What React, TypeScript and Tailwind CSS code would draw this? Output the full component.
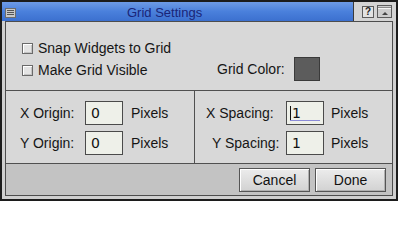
import React from "react";

function Checkbox() {
  return (
    <div className="w-[11px] h-[11px] border border-[#6a6a6a] bg-[#e4e4e4] shadow-[inset_1px_1px_0_#ffffff,inset_-1px_-1px_0_#c4c4c4] shrink-0" />
  );
}

function Field({ value, focused }: { value: string; focused?: boolean }) {
  return (
    <div className="relative w-[38px] h-[24px] border border-[#4a4a4a] bg-[#eef0e9] flex items-center pl-[3px] text-[14px] text-[#111] font-['DejaVu_Sans',sans-serif] shrink-0">
      {focused && <span className="w-px h-[14px] bg-[#111] mr-[1px]" />}
      <span className={focused ? "" : "pl-[2px]"}>{value}</span>
      {focused && <div className="absolute left-[3px] right-[3px] bottom-[3px] h-px bg-[#8b8bd9]" />}
    </div>
  );
}

function Btn({ label }: { label: string }) {
  return (
    <div className="w-[71px] h-[24px] border border-[#555] bg-gradient-to-b from-[#ececec] to-[#d2d2d2] shadow-[inset_1px_1px_0_#ffffff,inset_-1px_-1px_0_#b0b0b0] flex items-center justify-center text-[14px] text-[#111]">
      {label}
    </div>
  );
}

export default function App() {
  return (
    <div className="w-[398px] h-[201px] border-2 border-[#1c1c1c] bg-[#cfcfcf] flex flex-col font-['Liberation_Sans',Arial,sans-serif] text-[#151515] overflow-hidden">
      {/* Title bar */}
      <div className="h-[19px] flex shrink-0">
        <div className="w-[351px] h-full bg-gradient-to-b from-[#6e9be6] via-[#4a80dc] to-[#3c70cf] flex items-center">
          <div className="ml-[3px] mt-[2px] w-[11px] h-[10px] bg-[#c9c9c9] border border-[#6d6d6d] flex flex-col justify-center gap-[1px] px-[1px]">
            <div className="h-px bg-[#555]" />
            <div className="h-px bg-[#555]" />
            <div className="h-px bg-[#555]" />
          </div>
          <div className="ml-[111px] text-[13px] leading-none text-[#1a2578] mt-[1px]">Grid Settings</div>
        </div>
        <div className="w-px h-full bg-[#3a3a3a]" />
        <div className="flex-1 h-full bg-[#d4d4d4] flex items-center pl-[8px] gap-[3px]">
          <div className="w-[12px] h-[12px] border border-[#5c5c5c] bg-[#e2e2e2] flex items-center justify-center text-[10px] font-bold leading-none text-[#222]">
            ?
          </div>
          <div className="w-[15px] h-[13px] border border-[#5c5c5c] bg-[#cdcdcd] flex flex-col items-center">
            <div className="w-full h-px bg-[#8a8a8a] mt-[1px]" />
            <div className="w-full h-px bg-[#f4f4f4]" />
            <div className="mt-[3px] w-0 h-0 border-l-[3px] border-r-[3px] border-b-[3px] border-l-transparent border-r-transparent border-b-[#444]" />
          </div>
        </div>
      </div>

      {/* Body */}
      <div className="flex-1 px-[3px] pb-[3px] flex flex-col">
        <div className="flex-1 border border-[#4d4d4d] bg-[#d8d8d8] flex flex-col text-[14px]">
          {/* Top section */}
          <div className="h-[68px] pl-[16px] flex flex-col shrink-0">
            <div className="mt-[18px] h-[16px] flex items-center gap-[5px]">
              <Checkbox />
              <span>Snap Widgets to Grid</span>
            </div>
            <div className="mt-[1px] h-[24px] flex items-center">
              <div className="w-[195px] flex items-center gap-[5px] pt-[3px]">
                <Checkbox />
                <span>Make Grid Visible</span>
              </div>
              <span className="pt-[1px]">Grid Color:</span>
              <div className="ml-[9px] w-[26px] h-[24px] border border-[#3a3a3a] bg-[#5c5c5c]" />
            </div>
          </div>
          <div className="h-px bg-[#505050] shrink-0" />

          {/* Middle section */}
          <div className="h-[72px] flex shrink-0">
            <div className="w-[188px] pt-[10px] flex flex-col gap-[6px]">
              <div className="h-[24px] flex items-center">
                <span className="w-[79px] pl-[14px]">X Origin:</span>
                <Field value="0" />
                <span className="ml-[8px]">Pixels</span>
              </div>
              <div className="h-[24px] flex items-center">
                <span className="w-[79px] pl-[14px]">Y Origin:</span>
                <Field value="0" />
                <span className="ml-[8px]">Pixels</span>
              </div>
            </div>
            <div className="w-px bg-[#505050]" />
            <div className="flex-1 pt-[10px] flex flex-col gap-[6px]">
              <div className="h-[24px] flex items-center">
                <span className="w-[91px] pl-[11px]">X Spacing:</span>
                <Field value="1" focused />
                <span className="ml-[7px]">Pixels</span>
              </div>
              <div className="h-[24px] flex items-center">
                <span className="w-[91px] pl-[17px]">Y Spacing:</span>
                <Field value="1" />
                <span className="ml-[7px]">Pixels</span>
              </div>
            </div>
          </div>
          <div className="h-px bg-[#505050] shrink-0" />

          {/* Bottom bar */}
          <div className="flex-1 bg-[#c3c3c3] flex justify-end items-start pt-[4px] pr-[6px] gap-[5px]">
            <Btn label="Cancel" />
            <Btn label="Done" />
          </div>
        </div>
      </div>
    </div>
  );
}
